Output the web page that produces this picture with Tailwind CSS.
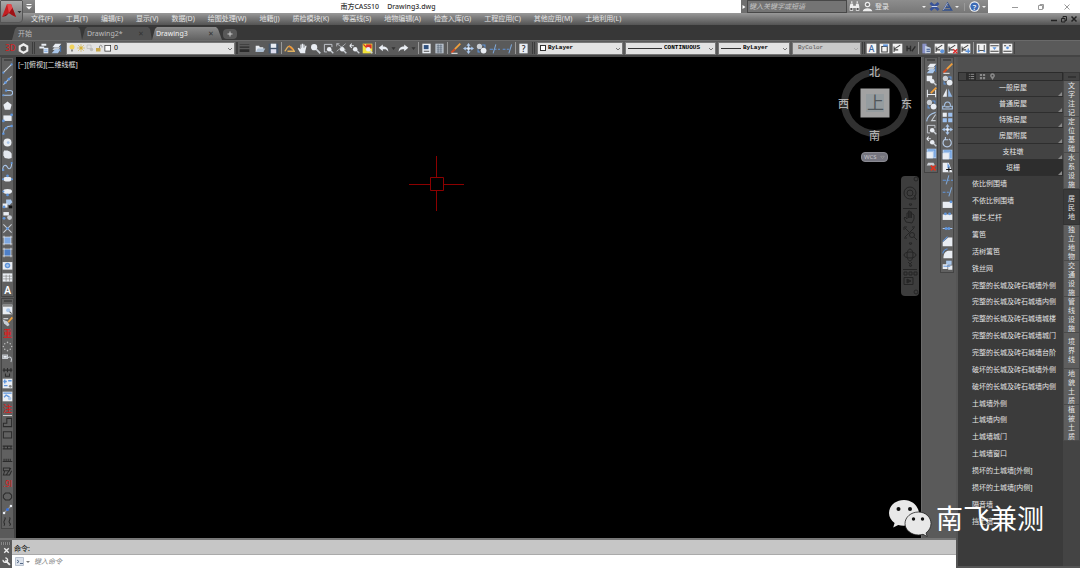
<!DOCTYPE html>
<html lang="zh-CN">
<head>
<meta charset="utf-8">
<meta name="viewport" content="width=device-width, initial-scale=1">
<title>南方CASS10 Drawing3.dwg</title>
<script src="https://cdn.jsdelivr.net/npm/@tailwindcss/browser@4"></script>
</head>
<body class="flex h-screen flex-col overflow-hidden bg-[#5a5a5a] font-['Noto_Sans','Noto_Sans_CJK_SC',sans-serif] text-[7px] leading-[10px] text-[#e4e4e4]">

<header class="relative shrink-0">
  <!-- title bar -->
  <div class="flex h-[13px] bg-white">
    <div class="w-[23px] shrink-0"></div>
    <button aria-label="自定义快速访问工具栏" class="flex w-3 shrink-0 items-center justify-center bg-gradient-to-b from-[#8c8c8c] to-[#6e6e6e]"><svg class="size-2" viewBox="0 0 8 8"><path d="M1.500 1.500h5" stroke="#fff"/><path d="M1 3.500h6L4 6.500z" fill="#fff"/></svg></button>
    <h1 class="flex flex-1 items-center justify-center gap-2 whitespace-pre text-[7px] font-medium text-[#333]"><span>南方CASS10</span><span>Drawing3.dwg</span></h1>
    <div class="flex w-[247px] shrink-0 items-center bg-gradient-to-b from-[#8d8d8d] to-[#777]">
      <button aria-label="展开搜索" class="flex h-full w-[6px] items-center justify-center bg-[#6f6f6f]"><svg class="h-2 w-1" viewBox="0 0 4 8"><path d="M.5 2v4l3-2z" fill="#fff"/></svg></button>
      <input aria-label="搜索" placeholder="键入关键字或短语" class="h-full w-[100px] border border-[#484848] bg-[#747474] px-px text-[7px] italic placeholder:text-[#c4c4c4]">
      <div id="titleTools" class="flex flex-1 items-center pl-[1px]"></div>
    </div>
    <div class="flex w-[92px] shrink-0 items-center justify-between pl-[23px] pr-[9px]">
      <button aria-label="最小化"><svg class="size-2" viewBox="0 0 8 8"><path d="M1 4.500h6" stroke="#999"/></svg></button>
      <button aria-label="还原"><svg class="size-2" viewBox="0 0 8 8" fill="none" stroke="#999"><path d="M1.500 2.500h4v4h-4zM3 2.500v-1h3.500v4h-1"/></svg></button>
      <button aria-label="关闭"><svg class="size-2" viewBox="0 0 8 8"><path d="M1.500 1.500l5 5m0-5l-5 5" stroke="#999"/></svg></button>
    </div>
  </div>
  <!-- menu bar -->
  <nav class="flex h-3 items-center bg-gradient-to-b from-[#999] to-[#545454] pl-[31px] pr-px">
    <div id="menu" class="flex flex-1 gap-[13px] whitespace-nowrap"></div>
    <button aria-label="最小化图形" class="w-[10px]"><svg class="size-2" viewBox="0 0 8 8"><path d="M1 5.500h6" stroke="#222" stroke-width="1.500"/></svg></button>
    <button aria-label="还原图形" class="w-[10px]"><svg class="size-2" viewBox="0 0 8 8" fill="none" stroke="#222"><path d="M1.500 3.500h3.500v3.500h-3.500zM3 3.500v-2h3.500v4H5"/></svg></button>
    <button aria-label="关闭图形" class="w-[9px]"><svg class="size-2" viewBox="0 0 8 8"><path d="M1.500 1.500l5 5m0-5l-5 5" stroke="#222" stroke-width="1.500"/></svg></button>
  </nav>
  <button aria-label="应用程序菜单" class="absolute left-0 top-0 flex h-[23px] w-[23px] items-center rounded-br-sm border border-[#555] bg-gradient-to-b from-[#aaa] to-[#707070]">
    <svg class="h-[21px] w-[21px]" viewBox="0 0 21 21"><path d="M6 3h4l5 13-4-2-3-2-3 2-4 2z" fill="#c41f22"/><path d="M6 3h4l1.500 4-3.500 5z" fill="#e4484a"/><path d="M8 12l3.500-5L15 16l-4-2z" fill="#9d1216"/><path d="M1 16l5-3 2-1-3 3z" fill="#7d0d10"/><path d="M16.500 10h4l-2 2.200z" fill="#333"/></svg>
  </button>
</header>

<!-- drawing tabs -->
<div role="tablist" class="flex h-[15px] shrink-0 items-end bg-[#373737] pl-3 text-[7px] text-[#bdbdbd]">
  <button role="tab" class="h-[13px] w-[70px] bg-[#585858] pl-[6px] text-left [clip-path:polygon(0_100%,3px_15%,5px_0,66px_0,68px_15%,100%_100%)]">开始</button>
  <div class="flex h-[13px] w-[70px] items-center justify-between bg-[#515151] pl-[5px] pr-[8px] [clip-path:polygon(0_100%,3px_15%,5px_0,66px_0,68px_15%,100%_100%)]"><button role="tab">Drawing2*</button><button aria-label="关闭 Drawing2" class="text-[#333]">✕</button></div>
  <div class="flex h-[13px] w-[70px] items-center justify-between bg-gradient-to-b from-[#8c8c8c] to-[#626262] pl-1 pr-2 text-[#f2f2f2] [clip-path:polygon(0_100%,3px_15%,5px_0,64px_0,66px_15%,100%_100%)]"><button role="tab" aria-selected="true">Drawing3</button><button aria-label="关闭 Drawing3" class="text-[#333]">✕</button></div>
  <button aria-label="新图形" class="mb-px ml-px flex h-[10px] w-[14px] items-center justify-center rounded-sm bg-[#585858]"><svg class="size-2" viewBox="0 0 8 8"><path d="M4 1.500v5M1.500 4h5" stroke="#ccc"/></svg></button>
</div>

<!-- top toolbars -->
<div class="flex h-[17px] shrink-0 items-center border-b-2 border-t border-b-[#444] border-t-[#6a6a6a] bg-[#5a5a5a] text-black">
  <div class="ml-[4px] flex" data-bar="h" data-icons="t3d hex"></div>
  <i class="ml-[2px] h-3 w-[3px] border-x border-[#3c3c3c]"></i>
  <div class="ml-[2px] flex" data-bar="h" data-icons="layers layerstack"></div>
  <div class="relative ml-[3px] flex h-[13px] w-[169px] items-center border border-[#777] bg-[#e2e2e2]">
    <div class="pointer-events-none flex items-center pl-px" id="layerIcons"></div>
    <select aria-label="图层" class="h-full flex-1 appearance-none pl-px text-[7px] leading-[10px] outline-none"><option>0</option></select>
    <svg class="pointer-events-none absolute right-0 top-[2px] size-2" viewBox="0 0 8 8"><path d="M2 3l2 2 2-2" fill="none" stroke="#777"/></svg>
  </div>
  <i class="ml-[1px] h-3 w-[2px] bg-[#3c3c3c]"></i>
  <div class="flex" data-bar="h" data-icons="lines"></div>
  <div class="ml-[3px] flex items-center" data-bar="h" data-icons="open save | pencil hand zoom zoomwin zoomall zoomprev zoomred | undo dd redo dd | prop calc | brush move copy trim extend | help"></div>
  <i class="ml-[2px] h-3 w-[3px] border-x border-[#3c3c3c]"></i>

  <div class="relative ml-[2px] flex h-[13px] w-[86px] items-center border border-[#777] bg-[#e2e2e2] pl-[2px]">
    <span class="mr-[2px] size-[6px] border border-[#333] bg-white"></span>
    <select aria-label="颜色" class="h-full flex-1 appearance-none font-['Liberation_Mono',monospace] text-[6px] font-bold leading-[10px] outline-none"><option>ByLayer</option></select>
    <svg class="pointer-events-none absolute right-0 top-[2px] size-2" viewBox="0 0 8 8"><path d="M2 3l2 2 2-2" fill="none" stroke="#777"/></svg>
  </div>
  <div class="relative ml-[2px] flex h-[13px] w-[91px] items-center border border-[#777] bg-[#e2e2e2] pl-[2px]">
    <span class="mr-[2px] h-px w-[34px] bg-[#333]"></span>
    <select aria-label="线型" class="h-full flex-1 appearance-none font-['Liberation_Mono',monospace] text-[6px] font-bold leading-[10px] outline-none"><option>CONTINUOUS</option></select>
    <svg class="pointer-events-none absolute right-0 top-[2px] size-2" viewBox="0 0 8 8"><path d="M2 3l2 2 2-2" fill="none" stroke="#777"/></svg>
  </div>
  <div class="relative ml-[2px] flex h-[13px] w-[72px] items-center border border-[#777] bg-[#e2e2e2] pl-[2px]">
    <span class="mr-[2px] h-px w-5 bg-[#333]"></span>
    <select aria-label="线宽" class="h-full flex-1 appearance-none font-['Liberation_Mono',monospace] text-[6px] font-bold leading-[10px] outline-none"><option>ByLayer</option></select>
    <svg class="pointer-events-none absolute right-0 top-[2px] size-2" viewBox="0 0 8 8"><path d="M2 3l2 2 2-2" fill="none" stroke="#777"/></svg>
  </div>
  <div class="relative ml-[2px] flex h-[13px] w-[69px] items-center border border-[#777] bg-[#c8c8c8] pl-[5px]">
    <select aria-label="打印样式" disabled class="h-full flex-1 appearance-none font-['Liberation_Mono',monospace] text-[6px] leading-[10px] text-[#555] opacity-100 outline-none"><option>ByColor</option></select>
    <svg class="pointer-events-none absolute right-0 top-[2px] size-2" viewBox="0 0 8 8"><path d="M2 3l2 2 2-2" fill="none" stroke="#aaa"/></svg>
  </div>
  <i class="ml-px h-3 w-[3px] border-x border-[#3c3c3c]"></i>
  <div class="flex items-center border-r border-[#444]" data-bar="h" data-icons="dA dBox dEdit dH | dInfo dPlus dDel dAdd | dU dTop dMid"></div>
</div>

<div class="flex min-h-0 flex-1">
  <!-- left side: drawing toolbar, canvas and command line -->
  <div class="flex min-w-0 flex-1 flex-col">
    <div class="flex min-h-0 flex-1">
      <div class="flex w-4 shrink-0 flex-col gap-px border-r-2 border-[#444] pl-px">
        <div class="flex h-[240px] flex-col border border-[#444] bg-[#606060]" data-bar="v" data-icons="line xline pline polygon rect arc circle cloud spline ellipse ellarc insert block point hatch grad region table textA"></div>
        <div class="flex h-[231px] flex-col border border-[#444] bg-[#606060]" data-bar="v" data-icons="win pen zhong dots link ruler map map2 zhu - step box rail comb bld n91 ring seg wave"></div>
      </div>

      <main class="relative min-w-0 flex-1 bg-black">
        <div class="flex px-[2px] pt-[3px] text-[7px]"><button>[−]</button><button>[俯视]</button><button>[二维线框]</button></div>
        <svg aria-label="十字光标" class="absolute left-[393px] top-[99px] h-[56px] w-[56px]" viewBox="0 0 56 56" fill="none" stroke="#8c0000"><path d="M27.500 0v21M27.500 35v20M0 28.500h21M35 28.500h20"/><path d="M21.500 21.500h13v13h-13z"/></svg>
        <!-- view cube -->
        <div class="absolute right-[6px] top-[8px] h-20 w-20">
          <svg class="h-20 w-20" viewBox="0 0 80 80"><circle cx="40" cy="38" r="30.500" fill="none" stroke="#303030" stroke-width="7"/><path d="M25.500 23.500h29v29h-29z" fill="#a2a2a2"/><path d="M31 29h18v18H31z" fill="#959c9f"/></svg>
          <button class="absolute left-[32px] top-[30px] size-4 text-center text-[17px] leading-4 text-[#50575b]">上</button>
          <span class="absolute left-[34px] top-px bg-black/40 text-[11px] font-medium leading-[12px] text-[#b0b0b0]">北</span>
          <span class="absolute left-[34px] top-[65px] text-[11px] font-medium leading-[12px] text-[#b0b0b0]">南</span>
          <span class="absolute left-[3px] top-[33px] text-[11px] font-medium leading-[12px] text-[#b0b0b0]">西</span>
          <span class="absolute left-[66px] top-[33px] text-[11px] font-medium leading-[12px] text-[#b0b0b0]">东</span>
        </div>
        <button class="absolute right-[33px] top-[95px] flex h-[10px] w-[27px] items-center justify-between rounded-sm border border-[#8a8a92] bg-[#74747e] px-[2px] text-[6px] leading-[8px] text-[#c4c4cc]">WCS<svg class="size-[5px]" viewBox="0 0 8 8"><path d="M1 2h6L4 6z" fill="none" stroke="#999"/></svg></button>
        <!-- navigation bar -->
        <div class="absolute right-[2px] top-[119px] h-[120px] w-[18px] rounded-sm bg-[#3d3d3d]">
          <svg aria-label="导航栏" class="h-[120px] w-[18px]" viewBox="0 0 18 120" fill="none" stroke="#252525"><circle cx="15" cy="3" r="2"/><circle cx="9" cy="17" r="6"/><circle cx="9" cy="17" r="3"/><path d="M13 19l2 4h-5M8 28h3l-1.500 2zM2 32.500h14"/><path d="M5 46l-2-4 1-1 2 2v-6h1.500v5-7h1.500v7-6h1.500v6-4h1.500l1 1v4l-2 4z"/><path d="M4 52l9 9M13 52l-9 9M3 51h3M3 51v3M14 51h-3M3 62h3"/><circle cx="11" cy="59" r="2.500" fill="#3d3d3d"/><path d="M13 61l3 3M8 67h3l-1.500 2z"/><ellipse cx="9" cy="79" rx="6" ry="3"/><ellipse cx="9" cy="79" rx="3" ry="6"/><path d="M7 86l2 2 2-2M8 89h3l-1.500 2zM2 93.500h14M3 96h3v3h-3zM8 96h3v3h-3zM13 96h3v3h-3zM3 101.500h9v7h-9z"/><path d="M6 103v4l4-2z" fill="#252525"/><circle cx="15" cy="116" r="2"/></svg>
        </div>
      </main>

      <div class="flex w-[35px] shrink-0 items-start gap-[2px] border-l border-[#6a6a6a] pl-[2px]">
        <div class="flex h-[116px] w-[14px] flex-col border border-[#444] bg-[#606060]" data-bar="v" data-icons="layerstack zoomdoc dimbrush copy arcnode zoomwin zoomprev scale erasex"></div>
        <div class="flex h-[216px] w-[14px] flex-col border border-[#444] bg-[#606060]" data-bar="v" data-icons="brush copy mirror offset array move rotate scale stretch trim extend break1 break2 join chamfer fillet explode"></div>
      </div>
    </div>

    <section aria-label="命令行" class="flex h-[30px] shrink-0 border-t-2 border-[#777]">
      <div class="flex w-3 shrink-0 flex-col items-center bg-[#5c5c5c]">
        <span class="mt-[2px] h-[3px] w-[10px] bg-[repeating-linear-gradient(90deg,#888_0_1px,#555_1px_2px)]"></span>
        <button aria-label="关闭命令行" class="mt-px"><svg class="size-[9px]" viewBox="0 0 8 8"><path d="M2 2l4 4m0-4L2 6" stroke="#eee" stroke-width="1.200"/></svg></button>
        <button aria-label="自定义命令行" class="mt-[2px]"><svg class="size-[9px]" viewBox="0 0 8 8"><path d="M3 3l4 4" stroke="#eee" stroke-width="1.600"/><path d="M1 2.500A2 2 0 1 0 3 .8" fill="none" stroke="#eee" stroke-width="1.200"/></svg></button>
      </div>
      <div class="flex min-w-0 flex-1 flex-col text-black">
        <p class="h-[15px] border-b border-[#aaa] bg-[#c6c6c6] pl-[2px] pt-[4px] text-[7px]">命令:</p>
        <label class="flex flex-1 items-center bg-white pl-[3px]">
          <svg class="h-[9px] w-[15px]" viewBox="0 0 15 9"><path d="M.5.5h8v8h-8z" fill="#dde3ec" stroke="#b9c2cf"/><path d="M2 3l2 1.500-2 1.500M5 6.500h3" fill="none" stroke="#566a88"/><path d="M11 4h4l-2 2z" fill="#777"/></svg>
          <input aria-label="命令" placeholder="键入命令" class="ml-1 flex-1 text-[7px] italic outline-none placeholder:text-[#888]">
        </label>
      </div>
    </section>
  </div>

  <!-- terrain feature panel -->
  <aside class="relative flex w-[124px] shrink-0 flex-col border-b-2 border-l-2 border-[#555] bg-[#444]">
    <div class="h-[15px] shrink-0 bg-[#505050]"></div>
    <div class="flex min-h-0 flex-1">
      <div class="flex min-w-0 flex-1 flex-col bg-[#3b3b3b]">
        <div class="flex h-[9px] shrink-0 items-center gap-[3px] border border-[#2b2b2b] bg-[#424242] pl-[7px]">
          <button aria-label="列表" class="flex h-full w-[10px] items-center justify-center bg-[#2c2c2c]"><svg class="size-[7px]" viewBox="0 0 8 8"><path d="M1 1.500h1M3 1.500h4M1 4h1M3 4h4M1 6.500h1M3 6.500h4" stroke="#999"/></svg></button>
          <button aria-label="图标"><svg class="size-[7px]" viewBox="0 0 8 8" fill="#8a8a8a"><path d="M1 1h2.500v2.500H1zM4.500 1H7v2.500H4.500zM1 4.500h2.500V7H1zM4.500 4.500H7V7H4.500z"/></svg></button>
          <button aria-label="位置"><svg class="size-[7px]" viewBox="0 0 8 8"><path d="M4 8L1.500 4a2.700 2.700 0 1 1 5 0z" fill="#8a8a8a"/><circle cx="4" cy="3" r="1" fill="#444"/></svg></button>
        </div>
        <div id="groups" class="flex h-[95px] shrink-0 flex-col"></div>
        <ul id="items" class="flex h-[354px] shrink-0 flex-col"></ul>
      </div>
      <div class="flex w-[17px] shrink-0 flex-col bg-[#444]">
        <div class="flex h-[9px] shrink-0 items-center justify-center border border-[#383838]"><span class="h-[2px] w-2 bg-[#333]"></span></div>
        <div id="sideTabs" role="tablist" class="flex flex-col"></div>
      </div>
    </div>
    <!-- channel signature -->
    <div class="pointer-events-none absolute bottom-[29px] right-[36px] flex items-center gap-[4px] whitespace-nowrap text-white">
      <svg class="h-[37px] w-[43px]" viewBox="0 0 43 37"><path d="M15 0C6.500 0 0 5.800 0 13c0 4 2.200 7.600 5.600 10L4.200 27.500l5-2.600c2 .6 4 .9 6.300.8L30 12.500C29 5.500 22.800 0 15 0z" fill="#e8e8e8"/><circle cx="9.500" cy="9" r="2" fill="#111"/><circle cx="21" cy="9" r="2" fill="#111"/><path d="M29.500 12C22 12 16 17.200 16 23.500S22 35 29.500 35c1.600 0 3.100-.3 4.500-.7l4.200 2.200-1.200-3.600c3.100-2.200 5-5.600 5-9.400C42 17.200 36.500 12 29.500 12z" fill="#e8e8e8" stroke="#222" stroke-width=".8"/><circle cx="24.500" cy="19" r="1.700" fill="#111"/><circle cx="33.500" cy="19" r="1.700" fill="#111"/></svg>
      <span class="text-[27px] leading-[36px]">南飞兼测</span>
    </div>
  </aside>
</div>

<script>
const W = '#e9edf3', B = '#5f95dc', L = '#a9c6ea', G = '#c9ced4', D = '#2b2b2b';
const f = (d, c) => `<path d="${d}" fill="${c}"/>`;
const s = (d, c, w = 1.5) => `<path d="${d}" fill="none" stroke="${c}" stroke-width="${w}"/>`;
const c = (x, y, r, k) => `<circle cx="${x}" cy="${y}" r="${r}" fill="${k}"/>`;
const t = (txt, k, z) => `<text x="8" y="12.500" font-size="${z}" font-weight="500" text-anchor="middle" fill="${k}">${txt}</text>`;
const mag = s('M11 11l4 4', G, 2) + c(9, 9, 3.3, W);
const card = f('M1 1h14v14H1z', '#f2f2f2');
const tick = s('M3 13V5M3 9l9-6M3 10h6', '#444', 1.5);
// buttons that show a character instead of a drawing
const glyphs = {
  t3d: '<span class="text-[8px] font-medium leading-[12px] text-[#d22222]">3D</span>',
  textA: '<span class="text-[10px] font-semibold leading-[12px] text-white">A</span>',
  zhong: '<span class="text-[9px] font-medium leading-[12px] text-[#e01818]">重</span>',
  zhu: '<span class="text-[9px] leading-[12px] text-[#e01818]">注</span>',
  n91: '<span class="text-[8px] leading-[12px] text-[#e01818]">.9l</span>'
};
const icons = {
  t3d: ['三维'], textA: ['多行文字'], zhong: ['重复'], zhu: ['注记'], n91: ['高程点'],
  hex: ['视图样式', f('M8 0l7 4v8l-7 4-7-4V4z', '#eee') + f('M8 4l4 2v4l-4 2.500L4 10V6z', '#555')],
  layers: ['图层特性', f('M5 1h7v3H5zM2 5h7v3H2z', W) + f('M8 7h7v8H8z', '#dfe8f5') + s('M9 10h5M9 12.500h5', B, 1)],
  layerstack: ['图层状态', f('M6 1h9l-4 5H2z', W) + f('M5 6h9l-4 4H2z', G) + f('M6 9h8l-4 6H1z', L) + s('M14 4v9', '#4472b0')],
  lines: ['线宽', f('M1 2h14v1H1zM1 5h14v2H1zM1 9h14v4H1z', D)],
  open: ['打开', f('M1 4h5l1 2h5v7H1z', W) + f('M4 8h11l-3 5H1z', '#aebfd2')],
  save: ['保存', f('M1 1h14v14H1z', '#42546b') + f('M4 1h8v6H4z', W) + f('M4 9h8v6H4z', '#dde')],
  pencil: ['草图', s('M1 12c3-2 3-8 7-7s5 3 7 7H5', '#e0b060', 2) + s('M7 4l6 6', '#ee8b2b', 2)],
  hand: ['平移', f('M5 15L1 8l1.500-1L5 9V2h1.500v5H7V1h2v6h.500V2H11v6l1-4h2l-2 8v3z', W)],
  zoom: ['缩放', s('M9 9l6 6', G, 2.500) + c(6, 6, 4.500, W)],
  zoomwin: ['窗口缩放', s('M13 6V2H2v11h4', G, 1.300) + mag],
  zoomall: ['范围缩放', s('M1 1l13 9M14 1L1 12M1 5V1h4', G, 1) + mag],
  zoomprev: ['缩放上一个', s('M1 4h6M1 4l3-3M1 4l3 3', W) + mag],
  zoomred: ['局部放大', f('M1 1h14v14H1z', '#f2e33b') + f('M6 2h8v6H6z', '#d9302a') + s('M2 2l8 8', '#d9302a', 2) + mag],
  zoomdoc: ['缩放对象', f('M1 1h8v8H1z', W) + mag],
  undo: ['放弃', f('M1 7l6-5v3c5 0 8 2 8 8-2-4-4-4-8-4v3z', W)],
  redo: ['重做', f('M15 7L9 2v3C4 5 1 7 1 13c2-4 4-4 8-4v3z', W)],
  dd: ['更多', f('M5 6h6l-3 4z', '#333')],
  prop: ['特性', f('M2 1h12v14H2z', W) + f('M4 3h7v6H4z', '#31527f') + s('M4 12h8', '#555')],
  calc: ['计算器', f('M2 1h12v14H2z', '#b9c2cc') + s('M4 4h8M4 7h8M4 10h8M4 13h8M6 2v12M10 2v12', '#596675', 1)],
  brush: ['删除', s('M15 1L7 9', '#f0a03c', 2.500) + s('M7 9l-5 5', '#d24a22', 3) + s('M2 15h9', '#eee')],
  move: ['移动', f('M8 0l3 4H9v3h3V5l4 3-4 3V9H9v3h2l-3 4-3-4h2V9H4v2L0 8l4-3v2h3V4H5z', L) + c(8, 8, 2, W)],
  copy: ['复制', c(5, 5, 3.800, G) + c(11, 11, 4.200, W) + s('M9 3h4v4M3 9v4h3', B)],
  trim: ['修剪', s('M1 9h5M8 9h3M13 9h3', B) + s('M10 2L6 15', '#7fa8d8')],
  extend: ['延伸', s('M1 9h4M7 9h3', B) + s('M14 2l-4 13', '#7fa8d8')],
  help: ['帮助', f('M2 1h12v14H2z', W) + t('?', '#222', 12)],
  dA: ['文字注记', card + t('A', '#3a64a0', 13)],
  dBox: ['面注记', card + s('M4 5h8v8H4z', '#444') + f('M6 2h7v3H6z', B)],
  dEdit: ['编辑注记', card + tick], dH: ['高程', s('M3 4v8M3 8h5M8 4v8M10 12l5-7', D, 2)],
  dInfo: ['查询', f('M2 1h6v14H2z', '#8a93c8') + f('M6 4l8 3v8H6z', '#c9d4e6') + s('M8 9h5M8 12h5', '#39528a')],
  dPlus: ['加点', card + tick + c(12, 12, 3, B)], dDel: ['删点', card + tick + s('M9 9l6 6M15 9l-6 6', '#dd2b2b', 2)],
  dAdd: ['插入', card + tick + s('M12 8v7M8 12h7', B, 2)],
  dU: ['闭合', card + s('M4 3v8h8V3', '#555') + c(4, 12, 1.500, B) + c(12, 12, 1.500, B)],
  dTop: ['上对齐', card + s('M2 4h12M2 12h12', '#444') + f('M5 6h6l-3 4z', B)],
  dMid: ['居中', card + s('M2 12h12', '#444') + c(8, 7, 2, B) + s('M3 4h3M10 4h3', '#444')],
  line: ['直线', s('M2 14L14 2', G) + c(2, 14, 1.500, B) + c(14, 2, 1.500, B)],
  xline: ['构造线', s('M2 14L14 2', G) + c(5, 11, 2, B) + c(10, 6, 2, B)],
  pline: ['多段线', s('M1 12h11a3 3 0 0 0 0-7H6', L) + c(6, 5, 1.800, B) + c(2, 12, 1.500, B)],
  polygon: ['正多边形', f('M8 2l6 5-2 7H4L2 7z', W)],
  rect: ['矩形', f('M2 5h12v8H2z', W) + c(14, 4, 2, B) + c(2, 13, 2, B)],
  arc: ['圆弧', s('M2 15C2 8 6 3 14 3', L) + c(2, 14, 1.800, B) + c(6, 6, 1.800, B) + c(14, 3, 1.800, B)],
  circle: ['圆', c(8, 8, 5.800, W) + c(9, 8, 2, L)],
  cloud: ['修订云线', f('M3 2h5l4 2 2 3v6l-4 1-6-1-2-4V5z', '#e4e8ee')],
  spline: ['样条曲线', s('M1 14c0-9 5-9 7-5s6 3 6-7', L) + c(2, 13, 1.500, B) + c(14, 3, 1.500, B)],
  ellipse: ['椭圆', `<ellipse cx="8" cy="9" rx="6" ry="3.500" fill="${W}"/>` + c(8, 4, 2, B) + c(1.500, 9, 1.500, B) + c(14.500, 9, 1.500, B)],
  ellarc: ['椭圆弧', `<ellipse cx="8" cy="8" rx="6.500" ry="3.500" fill="${W}"/>` + c(8, 13, 2, B) + c(2, 8, 1.500, B)],
  insert: ['插入块', f('M6 2h7l2 4-4 4-5-1z', L) + f('M1 8h7v6H1z', W) + c(3, 13, 2, B) + f('M10 11h5v4h-5z', '#111')],
  block: ['创建块', f('M2 3h8v5H2z', W) + c(11, 11, 3.500, G) + c(3, 12, 2, B)],
  point: ['点', s('M2 2l12 12M14 2L2 14', G) + c(8, 8, 2, B)],
  hatch: ['图案填充', f('M3 3h10v10H3z', '#7da7e0') + s('M1 3h14M3 1v14M13 1v14M1 13h14', W, 1)],
  grad: ['渐变色', f('M3 3h10v10H3z', '#4d7fc8') + s('M1 3h14M3 1v14M13 1v14M1 13h14', W, 1)],
  region: ['面域', f('M1 3h14v11H1z', W) + c(8, 8, 4, B) + c(8, 8, 2, L)],
  table: ['表格', f('M1 2h14v12H1z', W) + s('M1 6h14M1 10h14M6 4v10M11 4v10', '#888', 1)],
  win: ['窗口', f('M1 1h14v14H1z', W) + f('M1 1h14v3H1z', '#888') + c(9, 9, 3, L) + s('M11 11l3 3', '#555')],
  pen: ['画笔', f('M1 5l7 3 3 5-3 2-5-4z', G) + s('M15 2L9 9', '#f0a03c', 2.500) + s('M2 4h7', W)],
  dots: ['点阵', [[4, 4], [8, 2], [12, 4], [2, 8], [14, 8], [4, 12], [8, 14], [12, 12]].map(p => c(p[0], p[1], 1.100, '#bbb')).join('')],
  link: ['连接', s('M1 3h7v5H1zM8 7c5-3 7 1 5 6', G) + f('M2 4h5v3H2z', W)],
  ruler: ['比例尺', s('M1 6h14M3 3v6M8 3v6M13 3v6M5 11v4h6v-4', D)],
  map: ['地图', f('M1 1h14v14H1z', W) + s('M2 5h5M4 2v6M9 4h5M3 11h5', B, 2) + c(12, 12, 2, '#888')],
  map2: ['图幅', f('M1 1h14v14H1z', W) + s('M2 3h12M3 9l3-3 5 3', B, 2) + c(11, 11, 2.500, L)],
  step: ['多点房屋', s('M2 14V9h5V2h7v12z', D)], box: ['四点房屋', s('M2 4h12v9H2z', D)],
  rail: ['围墙', s('M1 6h14M1 10h14M3 6v4M8 6v4M13 6v4', D)], comb: ['陡坎', s('M1 11h14M3 7v4M6 7v4M9 7v4M12 7v4', D)],
  bld: ['房屋', s('M2 3h9v4H2zM4 7l-2 6h9l3-6M6 13l7-10', D)],
  ring: ['圆形', s('M5 3h6l3 3v4l-3 3H5l-3-3V6z', D)],
  seg: ['线段', s('M2 14L14 2', '#999') + c(3, 13, 1.800, W) + c(8, 8, 2.200, '#3d73d8') + c(13, 3, 1.800, W)],
  wave: ['等高线', s('M4 2c3 3-3 5-1 8s0 3 0 4M11 2c3 3-3 5 0 8s0 3 0 4', D)],
  dimbrush: ['标注', s('M2 4v11M14 4v11M2 11h12', W) + s('M15 1L7 9', '#f0a03c', 2.500)],
  arcnode: ['编辑多段线', s('M1 15C2 7 6 4 14 2', L) + s('M14 5l-6 9h6', G)],
  scale: ['缩放', f('M1 1h14v14H1z', L) + f('M1 6h9v9H1z', W) + s('M3 3h10v10', B)],
  erasex: ['清除', f('M3 4h8l2 4H1z', G) + s('M7 8l7 7M14 8l-7 7', '#e0331f', 2.500)],
  mirror: ['镜像', f('M7 2v12H1z', W) + f('M9 2v12h6z', '#8fb4e2')],
  offset: ['偏移', s('M1 13h14V9h-3c2-8-10-8-8 0H1zM5 10h6', L)],
  array: ['阵列', f('M1 1h6v6H1z', W) + f('M9 1h6v6H9zM1 9h6v6H1zM9 9h6v6H9z', '#9cc0ef')],
  rotate: ['旋转', s('M10 3a6 6 0 1 1-5 0M5 0v4h4', '#b4c8e2', 1.700)],
  stretch: ['拉伸', f('M1 1h9l5 14H1z', W) + f('M8 1l3 5v3H8z', B) + s('M6 11h8M10 8v6', '#111')],
  break1: ['打断于点', f('M1 4h14v9H1z', W) + c(13, 4, 2, B)],
  break2: ['打断', f('M1 5h14v8H1z', W) + c(5, 4, 2, B) + c(11, 4, 2, B)],
  join: ['合并', s('M1 8h14', L) + c(6, 8, 2.200, B) + c(10, 8, 2.200, B)],
  chamfer: ['倒角', f('M1 15V9l8-7h6v13z', W) + s('M1 8l7-7', B)],
  fillet: ['圆角', f('M2 15c0-8 4-11 8-11h5v11z', W) + s('M1 8c1-4 3-6 7-7', B)],
  explode: ['分解', f('M6 1h8v6H6z', L) + f('M1 6h7v7H1zM9 8h6v6H9z', W) + s('M2 9h10', B)],
  find: ['查找', f('M2 4h4v10H1V8zM10 4h4l1 4v6h-5zM6 7h4v3H6z', '#eee') + s('M3 2h2M11 2h2', '#ddd', 3) + f('M2 10h3v3H2zM11 10h3v3h-3z', '#555')],
  user: ['用户', c(8, 5, 4, '#eee') + f('M1 15c1-6 13-6 14 0z', '#eee') + c(8, 5, 2.200, '#777')],
  exch: ['Exchange', s('M2 3l12 10M14 3L2 13', '#38539a', 4) + s('M4 8h8', '#ccd5ee')],
  a360: ['Autodesk 360', s('M8 3L2 13h12zM5 9h6', '#33518e', 2) + s('M8 3L2 13', '#dde', 1)],
  qm: ['帮助', c(8, 8, 7.500, '#f3f3f3') + c(8, 8, 6, '#3d6bb5') + t('?', '#fff', 11)],
  bulb: ['开', c(8, 6, 5, '#f2d35c') + f('M6 11h4v4H6z', '#888')],
  sun: ['解冻', c(8, 8, 3.500, '#f0cf54') + s('M8 0v16M0 8h16M2 2l12 12M14 2L2 14', '#c9a436', 1)],
  vp: ['视口', s('M2 2h8v7H2z', '#bbb') + c(11, 11, 3.500, '#bbb')],
  lock: ['解锁', f('M2 8h9v7H2z', '#c9a84a') + s('M9 8V4a3 3 0 0 1 5 0v3', '#777')],
  sw: ['颜色', f('M1 2h13v13H1z', '#333') + f('M2.500 3.500h10v10h-10z', '#fff')]
};
const svg = n => glyphs[n] || `<svg class="size-[11px] shrink-0" viewBox="0 0 16 16">${icons[n][1]}</svg>`;
document.querySelectorAll('[data-bar]').forEach(bar => {
  const v = bar.dataset.bar === 'v';
  bar.innerHTML = (v ? '<span class="mx-auto my-px h-[2px] w-[8px] shrink-0 bg-[#454545]"></span>' : '') +
    bar.dataset.icons.split(' ').map(n => {
      if (n === '|') return '<i class="mx-px h-3 w-px bg-[#999]"></i>';
      if (n === '-') return '<i class="mx-px h-px bg-[#ccc]"></i>';
      const cls = v ? 'flex min-h-0 flex-1 items-center justify-center' : n === 'dd' ? 'flex h-3 w-[7px] items-center justify-center' : 'flex h-3 w-[13px] items-center justify-center';
      return `<button class="${cls}" aria-label="${icons[n][0]}">${svg(n)}</button>`;
    }).join('');
});
document.getElementById('layerIcons').innerHTML = ['bulb', 'sun', 'vp', 'lock', 'sw'].map(n => `<svg class="mr-px size-[8px]" viewBox="0 0 16 16">${icons[n][1]}</svg>`).join('');
const tb = n => `<button class="flex w-[13px] items-center justify-center" aria-label="${icons[n][0]}">${svg(n)}</button>`;
const arrow = '<button aria-label="更多" class="w-[7px]"><svg class="h-1 w-[6px]" viewBox="0 0 6 4"><path d="M1 1h4L3 3z" fill="#eee"/></svg></button>';
document.getElementById('titleTools').innerHTML = tb('find') + tb('user') +
  '<button class="mr-auto pl-px leading-[10px]">登录</button>' + arrow + tb('exch') + tb('a360') + arrow + '<i class="mx-[3px] h-2 w-px bg-[#999]"></i>' + tb('qm') + arrow;
document.getElementById('menu').innerHTML = ['文件(F)', '工具(T)', '编辑(E)', '显示(V)', '数据(D)', '绘图处理(W)', '地籍(J)', '质检模块(K)', '等高线(S)', '地物编辑(A)', '检查入库(G)', '工程应用(C)', '其他应用(M)', '土地利用(L)']
  .map(m => `<button>${m}</button>`).join('');
document.getElementById('groups').innerHTML = ['一般房屋', '普通房屋', '特殊房屋', '房屋附属', '支柱墩', '垣栅'].map((g, i) =>
  `<button class="${i === 5 ? 'relative flex-1 border-b border-[#2e2e2e] bg-[#2d2d2d] pl-[5px]' : 'relative flex-1 border-b border-[#2e2e2e] bg-[#434343] pl-[5px]'}">${g}<svg class="absolute bottom-0 right-px size-1" viewBox="0 0 4 4"><path d="M4 0v4H0z" fill="#888"/></svg></button>`).join('');
document.getElementById('items').innerHTML = ['依比例围墙', '不依比例围墙', '栅栏.栏杆', '篱笆', '活树篱笆', '铁丝网', '完整的长城及砖石城墙外侧', '完整的长城及砖石城墙内侧', '完整的长城及砖石城墙城楼', '完整的长城及砖石城墙城门', '完整的长城及砖石城墙台阶', '破坏的长城及砖石城墙外侧', '破坏的长城及砖石城墙内侧', '土城墙外侧', '土城墙内侧', '土城墙城门', '土城墙窗口', '损坏的土城墙[外侧]', '损坏的土城墙[内侧]', '隔音墙', '挡土墙']
  .map(x => `<li class="flex flex-1 items-center whitespace-nowrap pl-[14px]"><button>${x}</button></li>`).join('');
document.getElementById('sideTabs').innerHTML = ['文字注记', '定位基础', '水系设施', '居民地', '独立地物', '交通设施', '管线设施', '境界线', '地貌土质', '植被土质'].map((x, i) =>
  `<button role="tab" class="${i === 3 ? 'flex h-9 items-center justify-center border border-[#333] bg-[#3a3a3a]' : 'flex h-9 items-center justify-center border-x border-b border-[#4a4a4a] bg-[#5e5e5e]'}"><span class="w-[7px] break-all text-[7px] leading-[9px]">${x}</span></button>`).join('');
</script>
</body>
</html>
